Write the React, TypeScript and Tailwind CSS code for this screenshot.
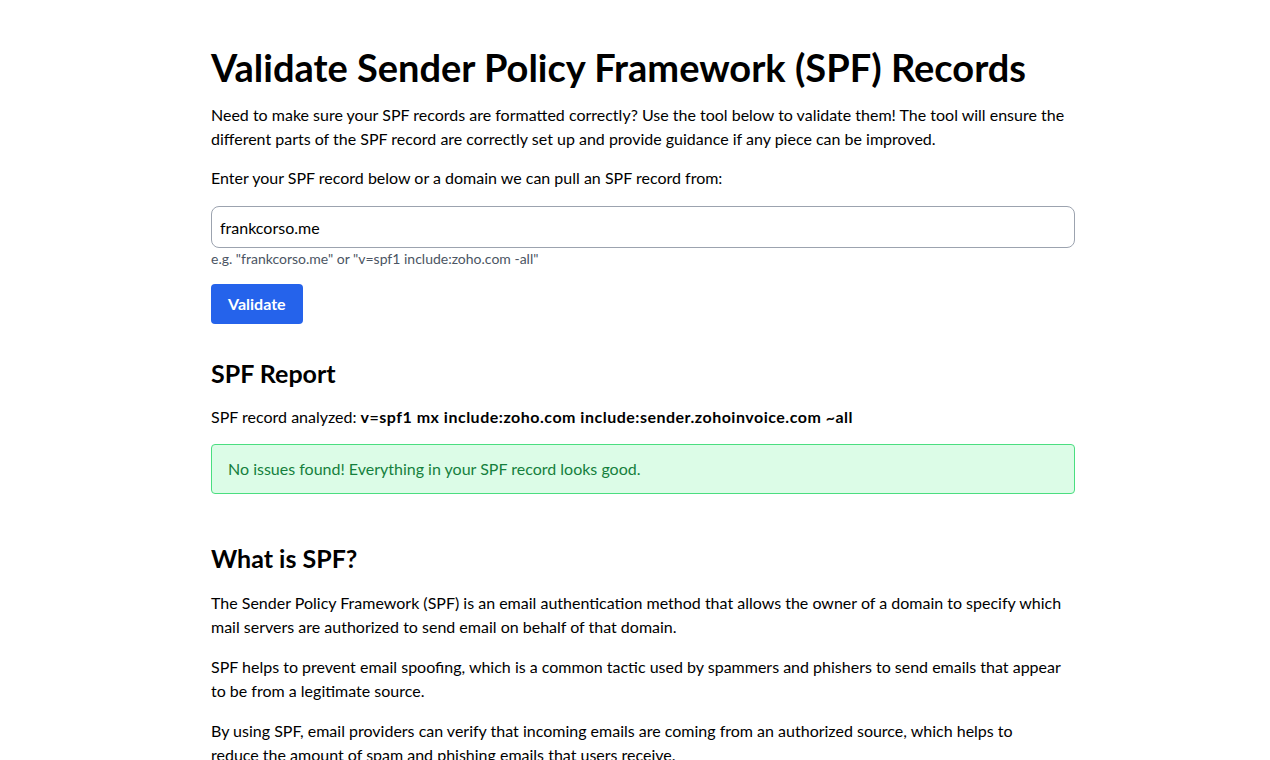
import React, { useState } from "react";

const font = { fontFamily: '"Segoe UI", Lato, "Noto Sans", sans-serif' };

function App() {
  const [value, setValue] = useState("frankcorso.me");
  return (
    <div className="min-h-screen bg-white text-black pl-4" style={font}>
      <div className="mx-auto w-[864px] pt-[41px]">
        <h1 className="text-[38px] font-bold leading-[52px]">
          Validate Sender Policy Framework (SPF) Records
        </h1>
        <p className="mt-[10px] text-base leading-6">
          Need to make sure your SPF records are formatted correctly? Use the tool below to validate them! The tool will
          ensure the different parts of the SPF record are correctly set up and provide guidance if any piece can be
          improved.
        </p>
        <p className="mt-[15px] text-base leading-6">Enter your SPF record below or a domain we can pull an SPF record from:</p>
        <input
          value={value}
          onChange={(e) => setValue(e.target.value)}
          className="mt-[16px] block w-full h-[42px] rounded-lg border border-[#9ca3af] px-[8px] text-base outline-none"
          style={font}
        />
        <p className="mt-[1px] text-[14px] leading-5 text-[#4b5563]">
          e.g. "frankcorso.me" or "v=spf1 include:zoho.com -all"
        </p>
        <button className="mt-[15px] h-10 rounded bg-[#2563eb] px-[17px] text-base font-bold text-white" style={font}>
          Validate
        </button>

        <h2 className="mt-[33px] text-[25px] font-bold leading-8">SPF Report</h2>
        <p className="mt-[16px] text-base leading-6">
          SPF record analyzed:{" "}
          <strong className="font-bold tracking-[0.5px]">v=spf1 mx include:zoho.com include:sender.zohoinvoice.com ~all</strong>
        </p>
        <div className="mt-[15px] rounded border border-[#4ade80] bg-[#dcfce7] px-4 py-[12px] text-base leading-6 text-[#15803d]">
          No issues found! Everything in your SPF record looks good.
        </div>

        <h2 className="mt-[48px] text-[25px] font-bold leading-8">What is SPF?</h2>
        <p className="mt-[17px] text-base leading-6">
          The Sender Policy Framework (SPF) is an email authentication method that allows the owner of a domain to specify
          which mail servers are authorized to send email on behalf of that domain.
        </p>
        <p className="mt-4 text-base leading-6">
          SPF helps to prevent email spoofing, which is a common tactic used by spammers and phishers to send emails that
          appear to be from a legitimate source.
        </p>
        <p className="mt-4 text-base leading-6">
          By using SPF, email providers can verify that incoming emails are coming from an authorized source, which helps
          to
          <br />
          reduce the amount of spam and phishing emails that users receive.
        </p>
      </div>
    </div>
  );
}

export default App;
